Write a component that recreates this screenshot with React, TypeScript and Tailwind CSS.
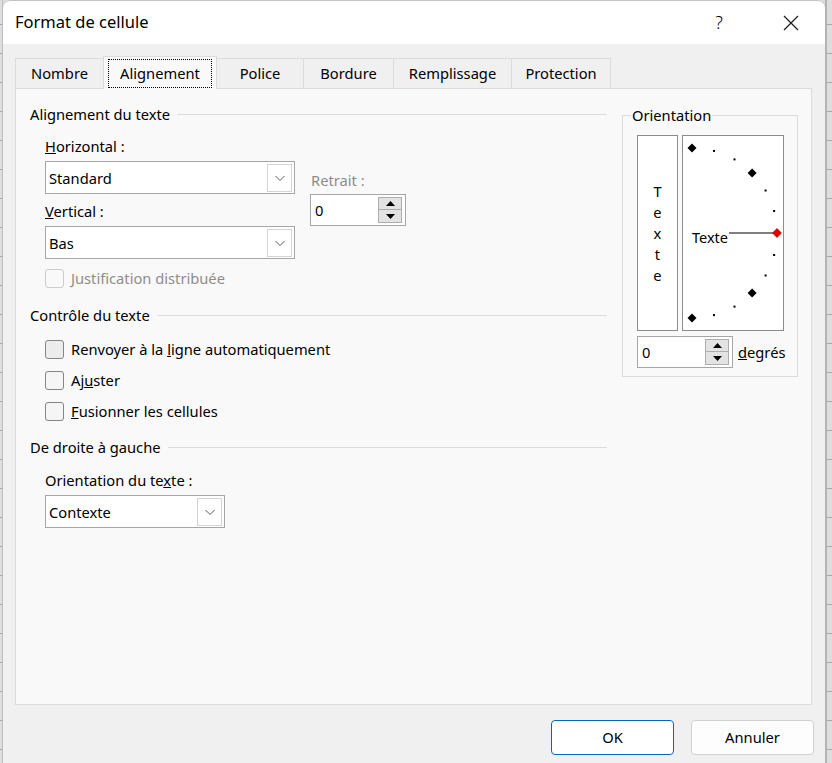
import React from 'react';

const font = { fontFamily: '"Noto Sans", "Open Sans", sans-serif' };

function SectionTitle({ label }: { label: string }) {
  return (
    <div className="flex items-center h-[20px]">
      <span className="whitespace-nowrap">{label}</span>
      <div className="flex-1 ml-[7px] h-px bg-[#dcdcdc]" />
    </div>
  );
}

function Chevron() {
  return (
    <svg width="12" height="8" viewBox="0 0 12 8">
      <path d="M1.5 2 L6 6.5 L10.5 2" fill="none" stroke="#5a5a5a" strokeWidth="1" />
    </svg>
  );
}

function Select({ value, width }: { value: string; width: string }) {
  return (
    <div className={`${width} h-[33px] bg-white border border-[#a6a6a6] flex items-center pl-[3px] pr-[2px]`}>
      <span className="flex-1 pt-px">{value}</span>
      <div className="w-[25px] h-[28px] border border-[#d4d4d4] flex items-center justify-center">
        <Chevron />
      </div>
    </div>
  );
}

function Spinner({ value }: { value: string }) {
  return (
    <div className="w-[96px] h-[32px] bg-white border border-[#a6a6a6] flex items-center pl-[4px] pr-[3px]">
      <span className="flex-1">{value}</span>
      <div className="w-[24px] flex flex-col">
        <div className="h-[13px] bg-[#e3e3e3] border border-[#adadad] flex items-center justify-center">
          <svg width="9" height="5" viewBox="0 0 9 5"><path d="M0 5 L4.5 0 L9 5 Z" fill="#000" /></svg>
        </div>
        <div className="h-[13px] bg-[#e3e3e3] border border-t-0 border-[#adadad] flex items-center justify-center">
          <svg width="9" height="5" viewBox="0 0 9 5"><path d="M0 0 L4.5 5 L9 0 Z" fill="#000" /></svg>
        </div>
      </div>
    </div>
  );
}

function Checkbox({ children, disabled, shaded }: { children: React.ReactNode; disabled?: boolean; shaded?: boolean }) {
  return (
    <div className="flex items-center h-[20px]">
      <div
        className={`w-[19px] h-[19px] rounded-[3px] border ${
          disabled ? 'border-[#cdcdcd] bg-[#f9f9f9]' : shaded ? 'border-[#858585] bg-[#ececec]' : 'border-[#858585] bg-[#f5f5f5]'
        }`}
      />
      <span className={`ml-[7px] ${disabled ? 'text-[#8d8d8d]' : ''}`}>{children}</span>
    </div>
  );
}

function Dial() {
  const cx = 9;
  const cy = 97;
  const r = 85;
  const marks = [90, 75, 60, 45, 30, 15, 0, -15, -30, -45, -60, -75, -90];
  return (
    <svg width="100" height="194" viewBox="0 0 100 194">
      <line x1="46" y1={cy} x2="90" y2={cy} stroke="#000" strokeWidth="1" />
      {marks.map((a) => {
        const x = cx + r * Math.cos((a * Math.PI) / 180);
        const y = cy - r * Math.sin((a * Math.PI) / 180);
        if (a === 0) {
          return <path key={a} d={`M${x} ${y - 4.5} L${x + 4.5} ${y} L${x} ${y + 4.5} L${x - 4.5} ${y} Z`} fill="#e00000" stroke="#7a0000" strokeWidth="0.6" />;
        }
        if (a % 45 === 0) {
          return <path key={a} d={`M${x} ${y - 4.5} L${x + 4.5} ${y} L${x} ${y + 4.5} L${x - 4.5} ${y} Z`} fill="#000" />;
        }
        return <rect key={a} x={x - 1} y={y - 1} width="2" height="2" fill="#000" />;
      })}
      <text x="9" y="107" fontSize="14.5" fill="#000" style={font}>Texte</text>
    </svg>
  );
}

function Tab({ label, width, active }: { label: string; width: string; active?: boolean }) {
  if (active) {
    return (
      <div className={`${width} h-[33px] -ml-px -mb-px relative bg-[#f9f9f9] border border-b-0 border-[#dcdcdc] flex items-center justify-center`}>
        <span className="px-[11px] py-[2px] border border-dotted border-black leading-[23px]">{label}</span>
      </div>
    );
  }
  return (
    <div className={`${width} h-[30px] -ml-px border border-b-0 border-[#dcdcdc] bg-[#f0f0f0] flex items-center justify-center`}>
      {label}
    </div>
  );
}

function SheetStrip({ width, edge }: { width: string; edge: string }) {
  const rows = Array.from({ length: 27 });
  return (
    <div className={`${width} h-full bg-[#dedede] ${edge} flex flex-col`}>
      <div className="h-[25px] shrink-0 border-b border-[#a8a8a8]" />
      {rows.map((_, i) => (
        <div key={i} className="h-[29px] shrink-0 border-b border-[#a8a8a8]" />
      ))}
    </div>
  );
}

export default function App() {
  return (
    <div className="w-[832px] h-[763px] flex overflow-hidden bg-[#dedede] text-[14.7px] text-black" style={font}>
      <SheetStrip width="w-[3px]" edge="border-r border-[#bdbdbd]" />
      <div className="w-[822px] h-full flex flex-col rounded-t-[8px] overflow-hidden border-t border-[#c4c4c4] shrink-0">
        {/* title bar */}
        <div className="h-[43px] bg-white flex items-center pl-[12px] pr-[26px] shrink-0">
          <span className="text-[16.5px] flex-1">Format de cellule</span>
          <span className="text-[18px] font-light mr-[60px]">?</span>
          <svg width="16" height="16" viewBox="0 0 16 16">
            <path d="M1 1 L15 15 M15 1 L1 15" stroke="#1a1a1a" strokeWidth="1.2" />
          </svg>
        </div>
        {/* body */}
        <div className="flex-1 bg-[#f0f0f0] flex flex-col px-[12px] pt-[12px]">
          <div className="flex items-end pl-px">
            <Tab label="Nombre" width="w-[89px]" />
            <Tab label="Alignement" width="w-[114px]" active />
            <Tab label="Police" width="w-[88px]" />
            <Tab label="Bordure" width="w-[91px]" />
            <Tab label="Remplissage" width="w-[119px]" />
            <Tab label="Protection" width="w-[100px]" />
          </div>
          <div className="w-[797px] h-[617px] bg-[#f9f9f9] border border-[#dcdcdc] flex pl-[14px] pt-[15px] shrink-0">
            {/* left column */}
            <div className="w-[577px] flex flex-col">
              <SectionTitle label="Alignement du texte" />
              <div className="flex pl-[15px] mt-[12px]">
                <div className="flex flex-col w-[250px]">
                  <div className="h-[20px] leading-[20px]"><u>H</u>orizontal :</div>
                  <div className="mt-[5px]"><Select value="Standard" width="w-[250px]" /></div>
                  <div className="h-[20px] leading-[20px] mt-[7px]"><u>V</u>ertical :</div>
                  <div className="mt-[5px]"><Select value="Bas" width="w-[250px]" /></div>
                </div>
                <div className="flex flex-col ml-[15px] mt-[34px]">
                  <div className="h-[20px] leading-[20px] text-[#8d8d8d] pl-px">Retrait :</div>
                  <div className="mt-[4px]"><Spinner value="0" /></div>
                </div>
              </div>
              <div className="pl-[15px] mt-[9px]">
                <Checkbox disabled>Justification distribuée</Checkbox>
              </div>
              <div className="mt-[17px]">
                <SectionTitle label="Contrôle du texte" />
              </div>
              <div className="pl-[15px] mt-[14px] flex flex-col gap-[11px]">
                <Checkbox shaded>Renvoyer à la <u>l</u>igne automatiquement</Checkbox>
                <Checkbox>Aj<u>u</u>ster</Checkbox>
                <Checkbox><u>F</u>usionner les cellules</Checkbox>
              </div>
              <div className="mt-[16px]">
                <SectionTitle label="De droite à gauche" />
              </div>
              <div className="pl-[15px] mt-[13px] flex flex-col">
                <div className="h-[20px] leading-[20px]">Orientation du te<u>x</u>te :</div>
                <div className="mt-[5px]"><Select value="Contexte" width="w-[180px]" /></div>
              </div>
            </div>
            {/* right column */}
            <div className="ml-[15px] w-[176px] pt-px">
              <fieldset className="border border-[#dcdcdc] pl-[14px] pt-[10px] pb-[8px]">
                <legend className="-ml-[6px] px-px leading-[20px]">Orientation</legend>
                <div className="flex gap-[4px]">
                  <div className="w-[41px] h-[196px] bg-white border border-[#8c8c8c] flex flex-col items-center justify-center leading-[21px]">
                    <span>T</span>
                    <span>e</span>
                    <span>x</span>
                    <span>t</span>
                    <span>e</span>
                  </div>
                  <div className="w-[102px] h-[196px] bg-white border border-[#8c8c8c]">
                    <Dial />
                  </div>
                </div>
                <div className="flex items-center mt-[5px]">
                  <Spinner value="0" />
                  <span className="ml-[5px]"><u>d</u>egrés</span>
                </div>
              </fieldset>
            </div>
          </div>
          {/* footer */}
          <div className="flex justify-end gap-[17px] mt-[15px] -mr-px">
            <button className="w-[123px] h-[35px] bg-white border border-[#0067c0] rounded-[4px]">OK</button>
            <button className="w-[123px] h-[35px] bg-[#fdfdfd] border border-[#d0d0d0] rounded-[4px]">Annuler</button>
          </div>
        </div>
      </div>
      <SheetStrip width="w-[7px]" edge="border-l-2 border-[#b4b4b4]" />
    </div>
  );
}
